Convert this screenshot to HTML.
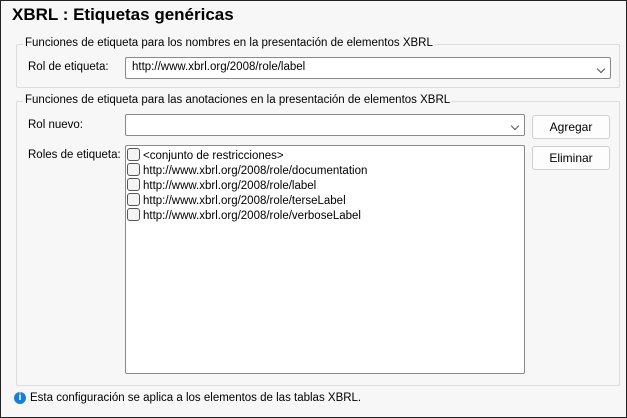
<!DOCTYPE html>
<html><head><style>
body{margin:0;width:627px;height:418px;overflow:hidden;font-family:"Liberation Sans",sans-serif;font-size:12px;color:#000}
.w{position:absolute;left:0;top:0;width:625px;height:416px;border:1px solid #222;background:#f7f7f7}
.a{position:absolute;white-space:nowrap}
.g{position:absolute;border:1px solid #dcdcdc;border-radius:2px}
.lg{position:absolute;background:#f7f7f7;padding:0 2px;font-size:11.5px;white-space:nowrap}
.in{position:absolute;background:#fff;border:1px solid #8a8a8a;border-radius:2px;box-sizing:border-box}
.btn{position:absolute;background:#fdfdfd;border:1px solid #d0d0d0;border-radius:3px;box-sizing:border-box;text-align:center;line-height:22px}
.cb{display:inline-block;width:11px;height:11px;border:1px solid #555;border-radius:3px;vertical-align:-2px;margin-right:3px;background:#f4f4f4}
.li{height:15px;line-height:15px;font-size:11.5px}
.ch{position:absolute;right:6px;top:8px;width:5px;height:5px;border-right:1px solid #555;border-bottom:1px solid #555;transform:rotate(45deg)}
</style></head><body><div class="w">
<div class="a" style="left:11px;top:4px;font-size:17px;font-weight:bold">XBRL : Etiquetas genéricas</div>
<div class="g" style="left:15px;top:43px;width:602px;height:42px"></div>
<div class="lg" style="left:22px;top:36px">Funciones de etiqueta para los nombres en la presentación de elementos XBRL</div>
<div class="a" style="left:27px;top:60px;font-size:11.5px">Rol de etiqueta:</div>
<div class="in" style="left:124px;top:56px;width:486px;height:22px"><span class="a" style="left:6px;top:3px;font-size:11.5px">http://www.xbrl.org/2008/role/label</span><div class="ch"></div></div>
<div class="g" style="left:15px;top:100px;width:602px;height:283px"></div>
<div class="lg" style="left:22px;top:93px">Funciones de etiqueta para las anotaciones en la presentación de elementos XBRL</div>
<div class="a" style="left:27px;top:118px;font-size:11.5px">Rol nuevo:</div>
<div class="in" style="left:124px;top:113px;width:400px;height:22px"><div class="ch"></div></div>
<div class="btn" style="left:531px;top:114px;width:78px;height:24px">Agregar</div>
<div class="btn" style="left:531px;top:145px;width:78px;height:24px">Eliminar</div>
<div class="a" style="left:27px;top:148px;font-size:11.5px">Roles de etiqueta:</div>
<div class="in" style="left:124px;top:144px;width:400px;height:229px;padding:2px 0 0 1px">
<div class="li"><span class="cb"></span>&lt;conjunto de restricciones&gt;</div>
<div class="li"><span class="cb"></span>http://www.xbrl.org/2008/role/documentation</div>
<div class="li"><span class="cb"></span>http://www.xbrl.org/2008/role/label</div>
<div class="li"><span class="cb"></span>http://www.xbrl.org/2008/role/terseLabel</div>
<div class="li"><span class="cb"></span>http://www.xbrl.org/2008/role/verboseLabel</div>
</div>
<div class="a" style="left:13px;top:391px;width:12px;height:12px;border-radius:50%;background:#1a7fd4;color:#fff;font-size:10px;font-weight:bold;text-align:center;line-height:12px">i</div>
<div class="a" style="left:29px;top:391px;font-size:11.5px">Esta configuración se aplica a los elementos de las tablas XBRL.</div>
</div></body></html>
